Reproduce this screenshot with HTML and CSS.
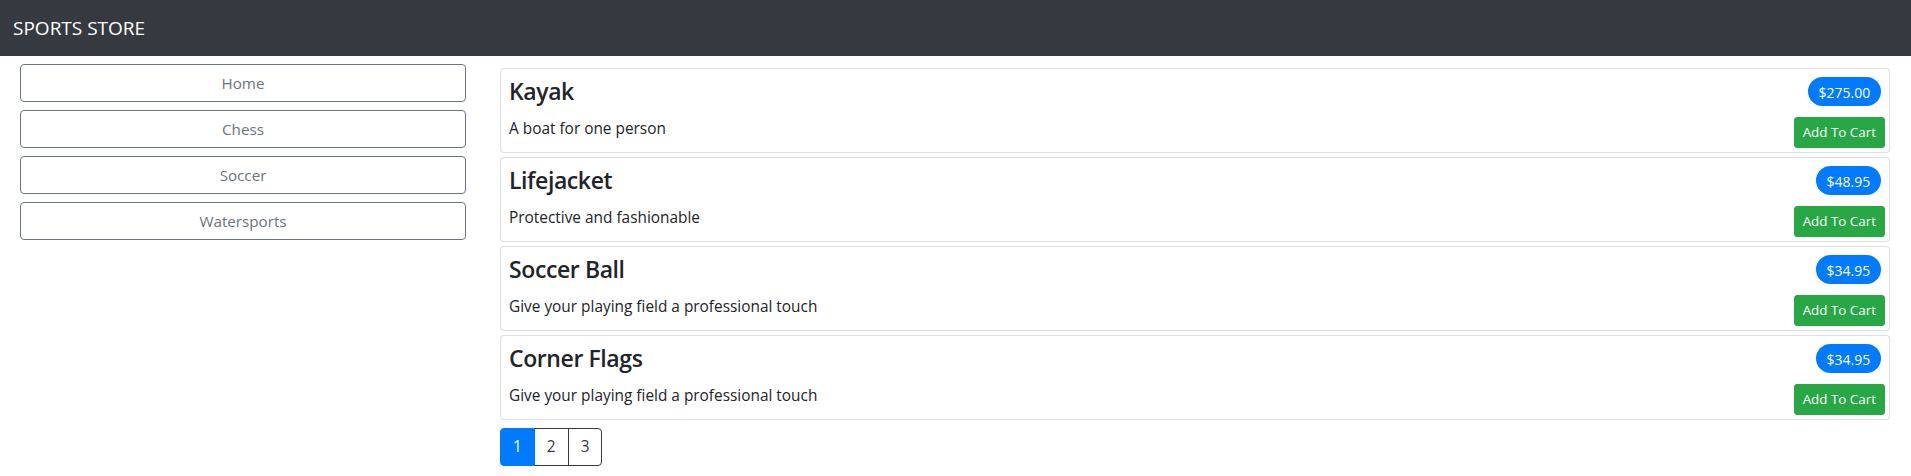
FILE: index.html
```html
<!DOCTYPE html>
<html lang="en">
<head>
<meta charset="utf-8">
<title>SportsStore</title>
<link rel="stylesheet" href="styles.css">
</head>
<body>
<header class="navbar">
  <span class="brand">SPORTS STORE</span>
</header>
<div class="layout">
  <nav class="categories">
    <a class="cat-btn" href="#">Home</a>
    <a class="cat-btn" href="#">Chess</a>
    <a class="cat-btn" href="#">Soccer</a>
    <a class="cat-btn" href="#">Watersports</a>
  </nav>
  <main class="products">
    <div class="card">
      <div class="card-head">
        <h4 class="card-title">Kayak</h4>
        <span class="badge"><small>$275.00</small></span>
      </div>
      <div class="card-body">
        <span class="card-text">A boat for one person</span>
        <button class="cart-btn" type="button">Add To Cart</button>
      </div>
    </div>
    <div class="card">
      <div class="card-head">
        <h4 class="card-title">Lifejacket</h4>
        <span class="badge"><small>$48.95</small></span>
      </div>
      <div class="card-body">
        <span class="card-text">Protective and fashionable</span>
        <button class="cart-btn" type="button">Add To Cart</button>
      </div>
    </div>
    <div class="card">
      <div class="card-head">
        <h4 class="card-title">Soccer Ball</h4>
        <span class="badge"><small>$34.95</small></span>
      </div>
      <div class="card-body">
        <span class="card-text">Give your playing field a professional touch</span>
        <button class="cart-btn" type="button">Add To Cart</button>
      </div>
    </div>
    <div class="card">
      <div class="card-head">
        <h4 class="card-title">Corner Flags</h4>
        <span class="badge"><small>$34.95</small></span>
      </div>
      <div class="card-body">
        <span class="card-text">Give your playing field a professional touch</span>
        <button class="cart-btn" type="button">Add To Cart</button>
      </div>
    </div>
    <div class="pager">
      <a class="page active" href="#">1</a>
      <a class="page" href="#">2</a>
      <a class="page" href="#">3</a>
    </div>
  </main>
</div>
</body>
</html>
```

FILE: styles.css
```css
* {
  box-sizing: border-box;
}

body {
  margin: 0;
  font-family: "Open Sans", "Noto Sans", sans-serif;
  font-size: 15.4px;
  line-height: 24px;
  color: #212529;
  background: #fff;
}

.navbar {
  background: #343a40;
  height: 56px;
  padding: 8px 13px;
}

.brand {
  display: block;
  padding: 5px 0;
  font-size: 19px;
  line-height: 30px;
  color: #fff;
}

.layout {
  display: grid;
  grid-template-columns: 446px 1390px;
  column-gap: 34px;
  align-items: start;
  padding: 8px 0 0 20px;
}

.categories {
  display: flex;
  flex-direction: column;
  gap: 8px;
}

.cat-btn {
  display: block;
  height: 38px;
  padding: 6px 12px;
  border: 1px solid #6c757d;
  border-radius: 4px;
  font-size: 15.2px;
  line-height: 24px;
  color: #6c757d;
  text-align: center;
  text-decoration: none;
}

.products {
  padding-top: 4px;
}

.card {
  display: flex;
  flex-direction: column;
  height: 85px;
  margin-bottom: 4px;
  padding: 4px;
  border: 1px solid rgba(0, 0, 0, 0.125);
  border-radius: 4px;
  background: #fff;
}

.card-head {
  display: flex;
  justify-content: space-between;
  align-items: flex-start;
  padding: 4px;
}

.card-title {
  margin: 0 0 8px;
  font-size: 23px;
  line-height: 28px;
  font-weight: 600;
  letter-spacing: -0.4px;
}

.badge {
  display: inline-block;
  padding: 4.5px 10.8px;
  font-size: 18px;
  line-height: 18px;
  color: #fff;
  background: #007bff;
  border-radius: 160px;
}

.badge small {
  font-size: 14px;
}

.card-body {
  display: flex;
  justify-content: space-between;
  align-items: flex-start;
}

.card-text {
  padding: 0 4px;
  line-height: 24px;
}

.cart-btn {
  height: 31px;
  padding: 4px 8px;
  border: 1px solid #28a745;
  border-radius: 3px;
  background: #28a745;
  color: #fff;
  font-family: inherit;
  font-size: 13.4px;
  line-height: 21px;
}

.pager {
  display: inline-flex;
  margin-top: 4px;
}

.page {
  display: block;
  height: 38px;
  padding: 6px 12px;
  border: 1px solid #343a40;
  color: #343a40;
  font-size: 15.4px;
  line-height: 24px;
  text-decoration: none;
}

.page + .page {
  margin-left: -1px;
}

.page:first-child {
  border-radius: 4px 0 0 4px;
}

.page:last-child {
  border-radius: 0 4px 4px 0;
}

.page.active {
  background: #007bff;
  border-color: #007bff;
  color: #fff;
  position: relative;
}
```
